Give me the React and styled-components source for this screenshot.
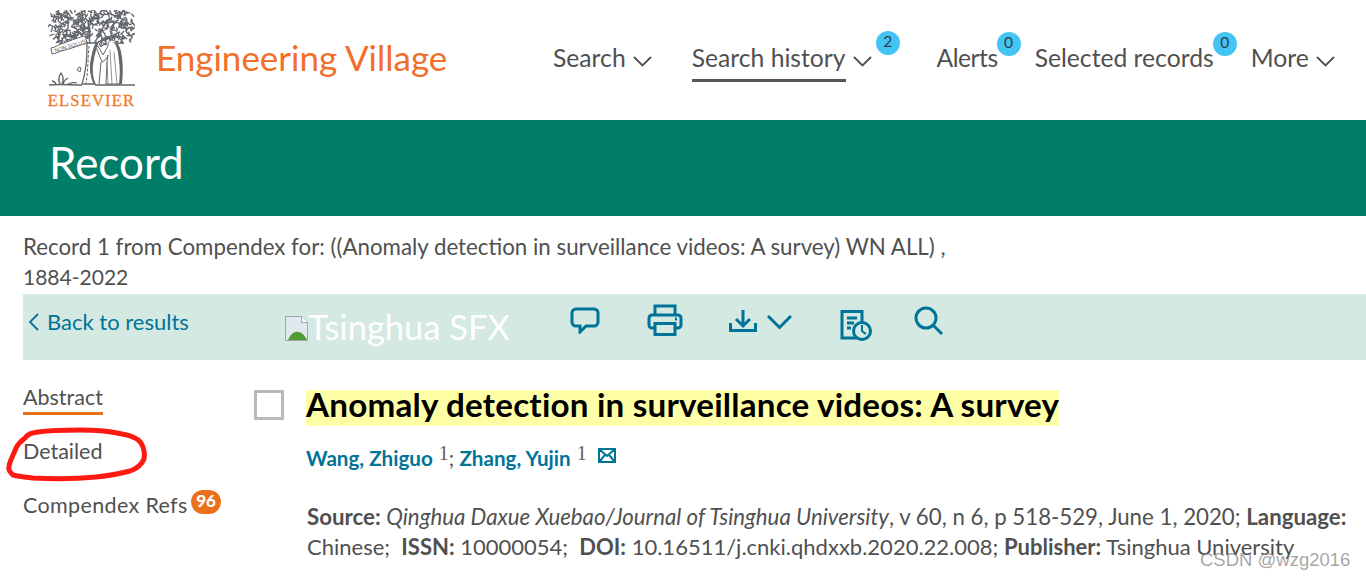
import React from "react";
import styled, { createGlobalStyle } from "styled-components";

const Global = createGlobalStyle`
  html, body { margin: 0; padding: 0; background: #fff; height: 579px; overflow: hidden; }
  body { font-family: "Lato", "Noto Sans", sans-serif; color: #505050; }
`;
const Page = styled.div`position: relative; width: 1366px; height: 579px; overflow: hidden;`;
const Header = styled.header`display: flex; height: 120px; align-items: flex-start;`;
const LogoBox = styled.div`width: 87px; margin: 10px 0 0 48px; display: flex; flex-direction: column; align-items: center;`;
const Elsevier = styled.div`font-family: "Liberation Serif", serif; font-size: 16.5px; line-height: 14px; letter-spacing: 1.2px; color: #f07a2a; margin-top: 6px; white-space: nowrap; -webkit-text-stroke: .3px #f07a2a;`;
const Brand = styled.div`font-size: 35px; line-height: 40px; color: #f26f2a; margin: 37px 0 0 21px; white-space: nowrap; width: 397px;`;
const Nav = styled.nav`display: flex; margin-top: 40px; font-size: 24.7px; line-height: 36px; color: #505050;`;
const NavItem = styled.div`position: relative; display: flex; align-items: center; margin-right: ${p => p.$gap}px; white-space: nowrap; letter-spacing: ${p => p.$ls || 0}px;`;
const NavLabel = styled.span`display: block; height: 42px; box-sizing: border-box; border-bottom: ${p => p.$active ? "3px solid #53565a" : "0"};`;
const Badge = styled.span`position: absolute; left: ${p => p.$left}px; top: ${p => p.$top}px; width: 24px; height: 24px; border-radius: 50%; background: #43c4f3; color: #2e3a4a; font-size: 15.5px; line-height: 21px; text-align: center; letter-spacing: 0;`;
const Band = styled.div`height: 96px; background: #007e68; color: #fff; font-size: 44px; line-height: 84px; padding-left: 49px;`;
const Info = styled.div`width: 930px; margin: 16px 0 0 23px; font-size: 22.3px; line-height: 30px; color: #505050;`;
const DateLine = styled.span`display: block; font-size: 21px;`;
const Toolbar = styled.div`display: flex; align-items: flex-start; height: 66px; margin: 2px 0 0 23px; background: #d4e9e2;`;
const Back = styled.a`display: flex; align-items: center; gap: 8px; width: 256px; margin: 12px 0 0 6px; font-size: 22px; line-height: 32px; color: #007398; white-space: nowrap;`;
const Sfx = styled.div`display: flex; align-items: flex-start; width: 285px; margin-top: 12px; font-size: 34.5px; line-height: 42px; color: #fff; white-space: nowrap;`;
const ToolIcon = styled.svg`flex: none; margin: ${p => p.$top}px 0 0 ${p => p.$left}px; fill: none; stroke: #007398; stroke-width: 3;`;
const Body = styled.div`display: flex;`;
const Side = styled.aside`width: 254px; flex: none; padding: 22px 0 0 23px; box-sizing: border-box; font-size: 21.5px;`;
const SideItem = styled.div`position: relative; display: table; height: ${p => p.$h}px; line-height: 30px; border-bottom: ${p => p.$active ? "3px solid #e9711c" : "0"}; box-sizing: border-box; margin-bottom: ${p => p.$mb}px; white-space: nowrap; letter-spacing: ${p => p.$ls || 0}px;`;
const Count = styled.span`position: absolute; left: 168px; top: 0; width: 30px; height: 24px; border-radius: 12px; background: #e9711c; color: #fff; font-size: 17px; font-weight: 900; line-height: 22px; text-align: center; letter-spacing: 0;`;
const Main = styled.main`flex: 1; display: grid; grid-template-columns: 52px 1fr; margin-top: 30px;`;
const Check = styled.div`width: 30px; height: 30px; box-sizing: border-box; border: 3px solid #b9b9b9; background: #fff;`;
const Title = styled.h1`display: inline-block; margin: 0; padding-bottom: 8px; font-size: 33.2px; line-height: 28px; font-weight: 700; color: #000; background: #ffffa8; letter-spacing: 0.2px; white-space: nowrap;`;
const Authors = styled.div`grid-column: 2; display: flex; align-items: flex-start; margin-top: 16px; font-size: 20.6px; line-height: 32px; color: #505050; white-space: nowrap;`;
const Author = styled.a`color: #007398; font-weight: 700;`;
const Sup = styled.span`font-size: 20px; position: relative; top: -5px; margin-left: 6px; font-family: "Liberation Serif", serif; color: #6b5b55;`;
const Source = styled.div`grid-column: 2; margin-top: 28px; padding-left: 1px; width: 1050px; line-height: 30px; color: #505050; white-space: nowrap;`;
const SourceLine = styled.div`font-size: ${p => p.$size}px;`;
const Em = styled.i``;
const Strong = styled.b`color: #505050;`;
const Circle = styled.svg`position: absolute; left: 0; top: 420px; overflow: visible;`;
const Watermark = styled.div`position: absolute; left: 1200px; top: 548px; font-family: "Liberation Sans", sans-serif; font-size: 18.5px; line-height: 24px; color: rgba(130,130,130,.72);`;

const Chev = ({ w = 19, h = 11, left = 7, top = 0, color = "#505050" }) => (
  <svg width={w} height={h} viewBox="0 0 19 11" style={{ marginLeft: left, marginTop: top, flex: "none" }} fill="none" stroke={color} strokeWidth="1.800"><path d="M1 1l8.500 8.500L18 1" /></svg>
);

const leaves = (() => {
  const out = []; let s = 11;
  const r = () => (s = (s * 16807) % 2147483647) / 2147483647;
  let n = 0;
  while (n < 380) {
    const x = r() * 86 + 1, y = r() * 35;
    const u = (x - 44) / 43, v = (y - 17) / 18;
    if (u * u * u * u + v * v * v * v > 1) continue;
    if (y > 27 && x > 30 && x < 52) continue;
    const t = r() * 6.28, l = 1.500 + r() * 1.500;
    out.push(`M${(x - Math.cos(t) * l).toFixed(1)} ${(y - Math.sin(t) * l).toFixed(1)}L${(x + Math.cos(t) * l).toFixed(1)} ${(y + Math.sin(t) * l).toFixed(1)}`);
    n++;
  }
  return out.join("");
})();

const Tree = () => (
  <svg width="87" height="78" viewBox="0 0 87 78" fill="none" stroke="#62666a">
    <path d={leaves} strokeWidth="1.300" />
    <path d="M42 36L26 16M42 36L40 10M46 34L58 12M48 33L72 22M40 33L14 24" strokeWidth="1.500" />
    <path d="M39 33c0 8 0 14-1 22-1 7-2 13-4 19h13c-4-8-5-14-4-22 1-7 3-13 6-19z" fill="#fff" strokeWidth="1.300" />
    <path d="M43 52c-1 8 0 16 3 22l1 0c-3-7-3-15-2-22 1-7 3-13 5-19l-2 0c-3 6-4 12-5 19z" fill="#62666a" strokeWidth=".8" />
    <path d="M41 36c-1 10-1 26-3 37" strokeWidth="1" strokeDasharray="3 1.500" />
    <path d="M3 38c6-1 8-4 13-5 8-3 16-6 21-7l2 7c-7 2-14 5-22 7-5 1-10 4-13 4z" fill="#fff" strokeWidth="1" />
    <text x="7" y="42.500" transform="rotate(-17 7 42)" fontFamily="Liberation Sans, sans-serif" fontSize="5.500" fill="#62666a" stroke="none">NON SOLUS</text>
    <path d="M64 30c-3 0-4 3-4 6l-5 9-5-9-2 1 6 15c3-1 5-4 6-7l-1 7-1 22h14c2-8 1-14 0-24-1-8-2-20-8-20z" fill="#fff" strokeWidth="1" />
    <path d="M65 32c4 3 5 9 6 18 1 8 1 16 0 24h3c1-10 1-18 0-26-1-7-2-16-9-16z" fill="#62666a" stroke="none" />
    <path d="M62 40l2 34M59 52l1 22M66 42l3 32" strokeWidth=".7" />
    <path d="M51 34l3-3 2 3-3 3zM53 52l-2 22" strokeWidth="1" />
    <path d="M1 75c10-1 20 0 33 0M47 75h40" strokeWidth="1.500" />
    <path d="M12 74c-2-4-1-8 1-11 2 3 3 7 1 11M15 74c1-4 3-5 5-6M8 74c-1-2-3-3-4-3M20 74c3-1 6-2 9-1" strokeWidth="1.300" />
    <path d="M29 60l2-3 2 1-1 4z" strokeWidth="1" />
  </svg>
);

export default function App() {
  return (
    <Page>
      <Global />
      <Header>
        <LogoBox><Tree /><Elsevier>ELSEVIER</Elsevier></LogoBox>
        <Brand>Engineering Village</Brand>
        <Nav>
          <NavItem $gap={40}><NavLabel>Search</NavLabel><Chev /></NavItem>
          <NavItem $gap={65}>
            <NavLabel $active>Search history</NavLabel><Chev />
            <Badge $left={184} $top={-9}>2</Badge>
          </NavItem>
          <NavItem $gap={37} $ls={-0.5}><NavLabel>Alerts</NavLabel><Badge $left={60} $top={-8}>0</Badge></NavItem>
          <NavItem $gap={37}><NavLabel>Selected records</NavLabel><Badge $left={178} $top={-8}>0</Badge></NavItem>
          <NavItem $gap={0}><NavLabel>More</NavLabel><Chev /></NavItem>
        </Nav>
      </Header>
      <Band>Record</Band>
      <Info>Record 1 from Compendex for: ((Anomaly detection in surveillance videos: A survey) WN ALL) ,<DateLine>1884-2022</DateLine></Info>
      <Toolbar>
        <Back>
          <svg width="10" height="18" viewBox="0 0 10 18" fill="none" stroke="#007398" strokeWidth="1.800"><path d="M9 1L1 9l8 8" /></svg>
          Back to results
        </Back>
        <Sfx>
          <svg width="23" height="25" viewBox="0 0 23 25" style={{ marginTop: 10, flex: "none" }}>
            <path d="M.5.5h16l6 6v18H.5z" fill="#dfe8ef" stroke="#a5a5a5" />
            <path d="M3 24c3-7 7-9 11-8 4 1 6 4 8 8z" fill="#4f9e33" />
            <path d="M16.500.5v6h6" fill="#fff" stroke="#a5a5a5" />
          </svg>
          Tsinghua SFX
        </Sfx>
        <ToolIcon $top={13} $left={0} width="30" height="27" viewBox="0 0 30 27"><path d="M6 2h18a4 4 0 0 1 4 4v9a4 4 0 0 1-4 4H16l-6 6v-6H6a4 4 0 0 1-4-4V6a4 4 0 0 1 4-4z" /></ToolIcon>
        <ToolIcon $top={10} $left={47} width="36" height="32" viewBox="0 0 36 32"><path d="M8 11V2h20v9M8 24H5a3 3 0 0 1-3-3V14a3 3 0 0 1 3-3h26a3 3 0 0 1 3 3v7a3 3 0 0 1-3 3h-3M8 19.500h20v11H8z" /><path d="M28 15h2" /></ToolIcon>
        <ToolIcon $top={16} $left={46} width="28" height="22" viewBox="0 0 28 22"><path d="M14 0v15M7 9l7 7 7-7M1.500 13v7.500h25V13" /></ToolIcon>
        <ToolIcon $top={21} $left={10} width="25" height="15" viewBox="0 0 25 15"><path d="M1 1l11.500 11.500L24 1" /></ToolIcon>
        <ToolIcon $top={16} $left={48} width="32" height="31" viewBox="0 0 32 31"><path d="M17 28H2V1.500h20V12M7 8h10M7 13h7M7 18h4" /><circle cx="22" cy="21" r="8.500" /><path d="M22 15v6l4 3" strokeWidth="2" /></ToolIcon>
        <ToolIcon $top={12} $left={42} width="29" height="29" viewBox="0 0 29 29"><circle cx="12" cy="12" r="10" /><path d="M19 19l9 9" /></ToolIcon>
      </Toolbar>
      <Body>
        <Side>
          <SideItem $active $h={33} $mb={21}>Abstract</SideItem>
          <SideItem $h={30} $mb={24}>Detailed</SideItem>
          <SideItem $h={30} $mb={0} $ls={0.35}>Compendex Refs<Count>96</Count></SideItem>
        </Side>
        <Main>
          <Check />
          <div><Title>Anomaly detection in surveillance videos: A survey</Title></div>
          <Authors>
            <Author>Wang, Zhiguo</Author><Sup>1</Sup>;&nbsp;<Author>Zhang, Yujin</Author><Sup>1</Sup>
            <svg width="18" height="15" viewBox="0 0 18 15" style={{ margin: "6px 0 0 11px" }} fill="none" stroke="#007398" strokeWidth="2"><path d="M1 1h16v13H1zM1 1l8 7 8-7M1 14l6-7M17 14l-6-7" /></svg>
          </Authors>
          <Source>
            <SourceLine $size={22.25}><Strong>Source:</Strong> <Em>Qinghua Daxue Xuebao/Journal of Tsinghua University</Em>, v 60, n 6, p 518-529, June 1, 2020; <Strong>Language:</Strong></SourceLine>
            <SourceLine $size={22}>Chinese;&nbsp; <Strong>ISSN:</Strong> 10000054;&nbsp; <Strong>DOI:</Strong> 10.16511/j.cnki.qhdxxb.2020.22.008; <Strong>Publisher:</Strong> Tsinghua University</SourceLine>
          </Source>
        </Main>
      </Body>
      <Circle width="150" height="64" viewBox="0 0 150 64" fill="none" stroke="#fe1a10" strokeWidth="5" strokeLinecap="round">
        <path d="M25 18C28 14 31 13 38 12 52 10 68 10 80 10 96 10 108 11 117 13 130 15 138 18 141 23 144 28 145 34 144 39 141 46 136 49 130 51 118 54 108 56 96 57 76 59 52 59 33 58 24 57 17 56 13 55 10 52 8 50 9 46 10 40 14 34 16 28 18 24 21 21 25 18z" />
      </Circle>
      <Watermark>CSDN @wzg2016</Watermark>
    </Page>
  );
}
